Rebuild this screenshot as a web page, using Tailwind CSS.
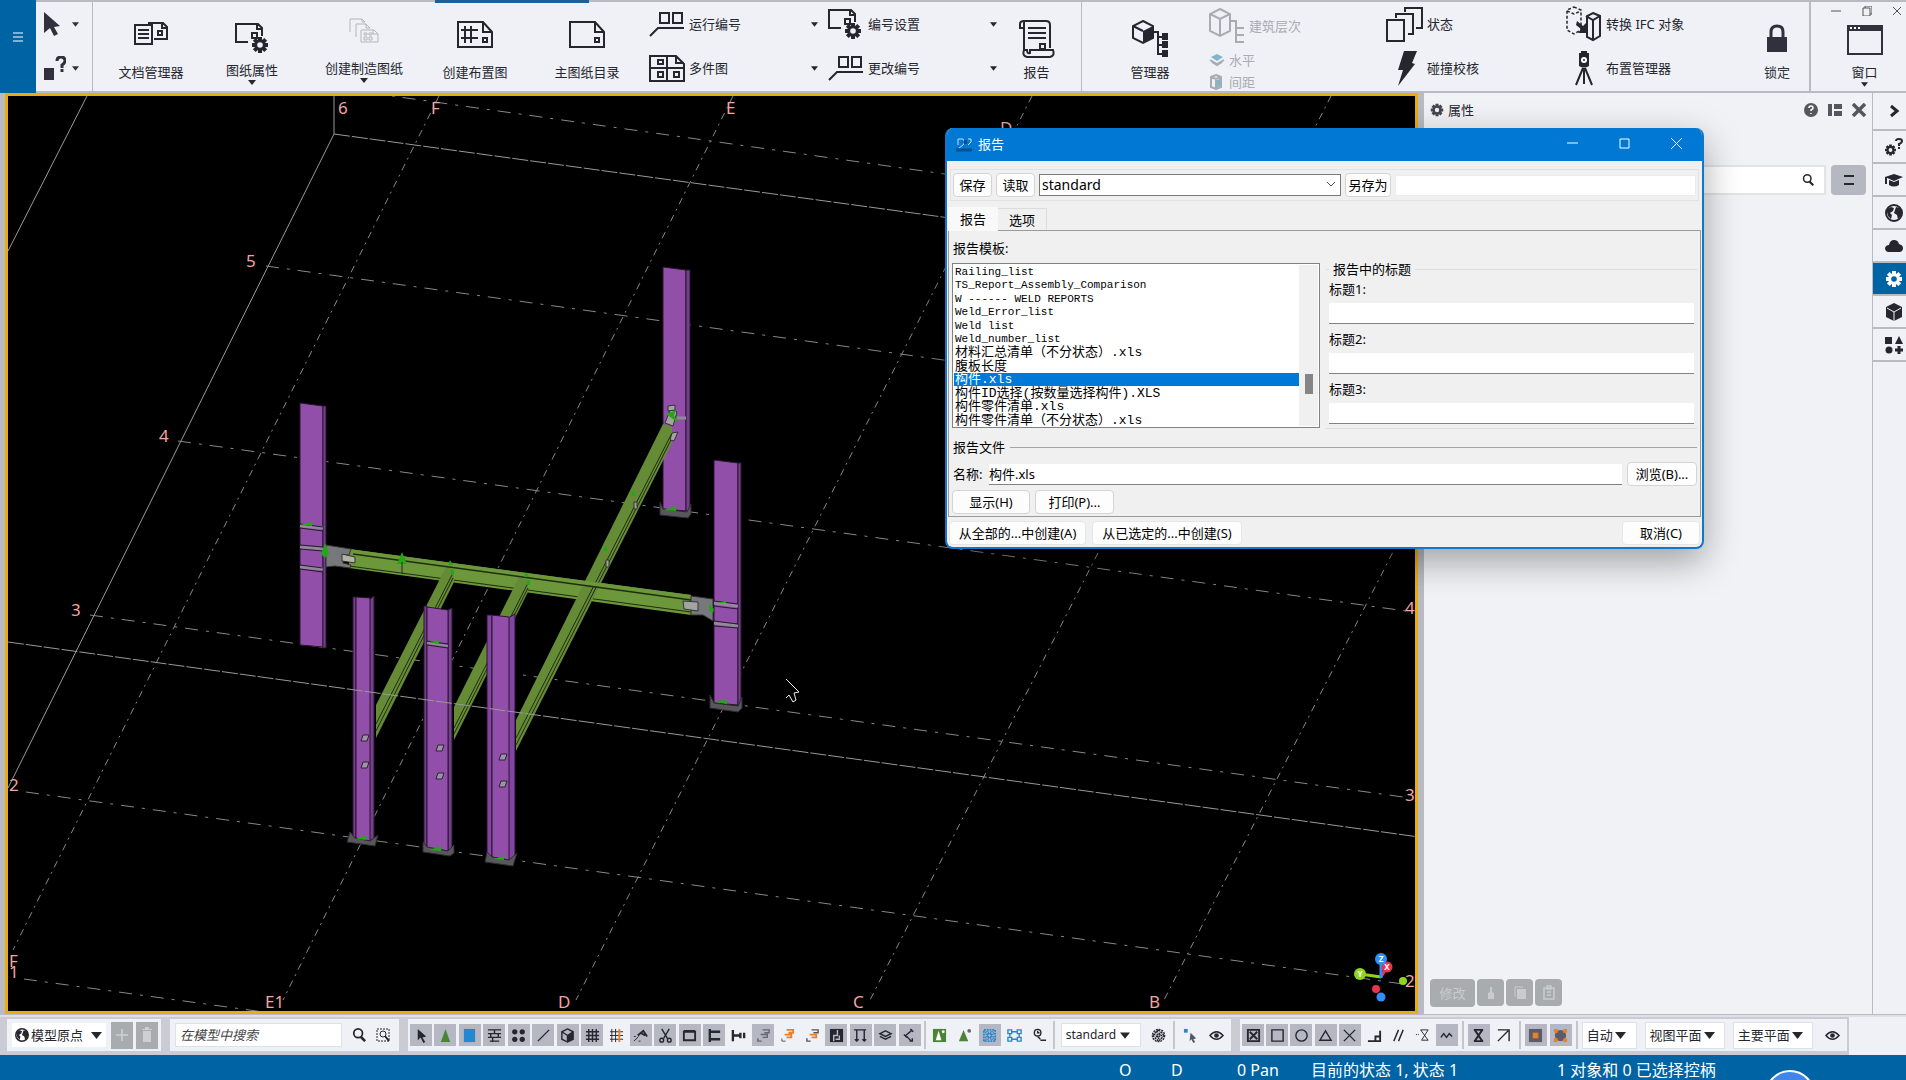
<!DOCTYPE html>
<html lang="zh-CN">
<head>
    <meta charset="UTF-8">
    <title>报告</title>
    <script src="https://cdn.jsdelivr.net/npm/@tailwindcss/browser@4"></script>
</head>
<body class="h-screen flex flex-col overflow-hidden bg-[#b9bac2] text-[#25262e] text-[13px] leading-4 font-['Noto_Sans','Noto_Sans_CJK_SC',sans-serif]">

    <!-- icon sprite -->
    <svg class="hidden">
        <defs>
            <g id="gear"><path d="M0-8V8M-8 0H8M-5.7-5.7 5.7 5.7M-5.7 5.7 5.7-5.7" stroke="currentColor" stroke-width="4"/><circle r="5.8" fill="currentColor"/><circle r="2.8" fill="var(--hole,#eff1f6)"/></g>
            <symbol id="i-docs" viewBox="0 0 34 24"><g fill="none" stroke="currentColor" stroke-width="2"><path d="M1 4h17v19H1zM4 9h11M4 13h11M4 17h11M14 2h15l4 4v12H20M28 1v6h5"/><path d="M24 10h4v4h-4z"/></g></symbol>
            <symbol id="i-props" viewBox="0 0 34 31"><path d="M13 19H1V1h22l4 4v8M22 1v5h5M17 10h5v5h-5z" fill="none" stroke="currentColor" stroke-width="2"/><use href="#gear" x="25" y="22"/></symbol>
            <symbol id="i-multi" viewBox="0 0 30 25"><g fill="none" stroke="currentColor"><path d="M1 14V1h12l3 3M13 1v3h3M7 19V6h10l4 4M17 6v4h4"/><path d="M12 24V12h13l4 4v8zM24 12v4h5M15 15h3v2h-3zM20 15h3v2h-3zM15 19h3v3h-3zM20 19h3v3h-3z"/></g></symbol>
            <symbol id="i-layout" viewBox="0 0 36 27"><g fill="none" stroke="currentColor" stroke-width="2"><path d="M1 1h25l9 10v15H1zM26 1v10h9M26 17h4v4h-4z"/><path d="M8 5v17M14 5v17M4 9h17M4 17h17"/></g></symbol>
            <symbol id="i-sheet" viewBox="0 0 36 27"><path d="M1 1h25l9 10v15H1zM26 1v10h9M26 17h4v4h-4z" fill="none" stroke="currentColor" stroke-width="2"/></symbol>
            <symbol id="i-number" viewBox="0 0 36 26"><path d="M11 2h9v10h-9zM24 2h9v10h-9zM35 17H9l-8 8" fill="none" stroke="currentColor" stroke-width="2"/></symbol>
            <symbol id="i-grid4" viewBox="0 0 36 27"><path d="M1 1h26l8 8v17H1zM18 1v25M1 13h34M27 1v7h8M9 5h5v4H9zM9 17h5v5H9zM25 17h5v5h-5z" fill="none" stroke="currentColor" stroke-width="2"/></symbol>
            <symbol id="i-report" viewBox="0 0 36 38"><g fill="none" stroke="currentColor" stroke-width="2"><path d="M5 8H1V4q0-3 4-3h22q4 0 4 4v23M5 2v28M9 8h18M9 13h18M9 18h18M21 24h5v5h-5z"/><path d="M11 30h23q2 6-3 7H8q-5-1-3-7h3q0 4 3 3z"/></g></symbol>
            <symbol id="i-manager" viewBox="0 0 37 38"><path d="M11 1 21 6v12L11 23 1 18V6z" fill="none" stroke="currentColor" stroke-width="2"/><path d="M11 11l10-5v12l-10 5z" fill="currentColor"/><path d="M1 6l10 5M22 12h4v22h6M26 17h6M26 25h6" fill="none" stroke="currentColor" stroke-width="2"/><path d="M30 13h6v7h-6zM30 21h6v7h-6zM30 30h6v7h-6z" fill="currentColor"/></symbol>
            <symbol id="i-storey" viewBox="0 0 36 36"><path d="M11 1 21 6v17l-10 5L1 23V6zM1 6l10 5 10-5M11 11v17M22 13h5v21h8M27 20h8M27 27h8" fill="none" stroke="currentColor" stroke-width="2"/></symbol>
            <symbol id="i-level" viewBox="0 0 16 14"><path d="M8 1l6 3-6 4-6-4z" fill="#7fb6cc"/><path d="M1 7l7 4 7-4M3 9l5 3 5-3" fill="none" stroke="currentColor" stroke-width="2"/></symbol>
            <symbol id="i-space" viewBox="0 0 14 16"><path d="M7 1l5 2v10l-5 2-5-2V3zM2 3l5 2 5-2M7 5v10" fill="none" stroke="currentColor" stroke-width="2"/><path d="M8 6l3-1v7l-3 2z" fill="#7fb6cc"/></symbol>
            <symbol id="i-states" viewBox="0 0 37 37"><path d="M1 14h17v21H1zM10 12V8h17v20h-5M19 6V2h17v20h-6" fill="none" stroke="currentColor" stroke-width="2"/></symbol>
            <symbol id="i-clash" viewBox="0 0 20 35"><path d="M7 0h13l-5 12 3 1L1 35l5-16H1z" fill="currentColor"/></symbol>
            <symbol id="i-ifc" viewBox="0 0 36 36"><path d="M8 1l7 3v20l-7 4-7-4V4zM1 5l7 3 7-3" fill="none" stroke="currentColor" stroke-width="1.500" stroke-dasharray="3 2"/><path d="M27 7l7 3v20l-7 4-6-3V10zM20 10l7 4 7-4M27 14v20" fill="none" stroke="currentColor" stroke-width="2"/><path d="M11 15l6 5 4-4v11h-9l3-4-5-4z" fill="currentColor"/></symbol>
            <symbol id="i-station" viewBox="0 0 20 35"><path d="M5 2h2V0h6v2h2v13q-5 3-10 0z" fill="currentColor"/><circle cx="10" cy="9" r="3" fill="#fff"/><circle cx="10" cy="9" r="1" fill="currentColor"/><path d="M9 17L2 34M11 17l7 17M10 17v16" stroke="currentColor" stroke-width="2"/></symbol>
            <symbol id="i-lock" viewBox="0 0 20 28"><path d="M4 14V8q0-6 6-6t6 6v6" fill="none" stroke="currentColor" stroke-width="3"/><path d="M0 13h20v15H0z" fill="currentColor"/></symbol>
            <symbol id="i-window" viewBox="0 0 36 30"><path d="M1 1h34v28H1z" fill="none" stroke="currentColor" stroke-width="2"/><path d="M0 0h36v6H0z" fill="currentColor"/><path d="M3 3h2M7 3h2M11 3h2" stroke="#fff" stroke-width="2"/></symbol>
            <symbol id="i-cursor" viewBox="0 0 16 24"><path d="M0 0l16 14-6 1 4 7-4 2-4-8-6 5z" fill="currentColor"/></symbol>
            <symbol id="i-help" viewBox="0 0 22 24"><path d="M0 12h10v12H0z" fill="currentColor"/><path d="M13 5q0-4 4-4t4 4q0 2-3 4v3M18 13v3" fill="none" stroke="currentColor" stroke-width="3"/></symbol>
            <symbol id="i-down" viewBox="0 0 8 5"><path d="M0 0h8L4 5z" fill="currentColor"/></symbol>
            <symbol id="i-search" viewBox="0 0 16 16"><circle cx="7" cy="6" r="5" fill="none" stroke="currentColor" stroke-width="2"/><path d="M10 10l5 5" stroke="currentColor" stroke-width="3"/></symbol>
            <symbol id="i-gear" viewBox="-9 -9 18 18"><use href="#gear"/></symbol>

            <!-- side bar -->
            <symbol id="s-arrow" viewBox="0 0 18 18"><path d="M6 4l6 5-6 5" fill="none" stroke="currentColor" stroke-width="3"/></symbol>
            <symbol id="s-gearq" viewBox="0 0 18 18"><g transform="translate(5.500 12) scale(.68)"><use href="#gear"/></g><path d="M11 3q0-2 3-2t3 2q0 2-3 3v2M14 9v2" fill="none" stroke="currentColor" stroke-width="2"/></symbol>
            <symbol id="s-learn" viewBox="0 0 18 18"><path d="M9 3l9 3-9 4-9-4zM4 9l5 2 5-2v5q-5 3-10 0z" fill="currentColor"/><path d="M1 6v7" stroke="currentColor" stroke-width="2"/></symbol>
            <symbol id="s-globe" viewBox="0 0 18 18"><circle cx="9" cy="9" r="8" fill="none" stroke="currentColor" stroke-width="2"/><path d="M2 5l4-2 3 1-1 3-3 2 2 2-1 4-3-3-1-4zM11 3l4 1 2 4-1 4-3 3-1-4-3-2 1-3z" fill="currentColor"/></symbol>
            <symbol id="s-cloud" viewBox="0 0 18 18"><path d="M3 15q-3-1-3-4 1-3 4-3 1-5 5-5 4 0 5 4 4 1 4 4 0 3-3 4z" fill="currentColor"/></symbol>
            <symbol id="s-cube" viewBox="0 0 18 18"><path d="M9 0l8 4v10l-8 4-8-4V4z" fill="currentColor"/><path d="M2 5l7 4 7-4M9 9v9" fill="none" stroke="#eff1f6"/></symbol>
            <symbol id="s-shapes" viewBox="0 0 18 18"><path d="M0 1h7v7H0zM14 0l4 8h-8z" fill="currentColor"/><circle cx="4" cy="14" r="3.500" fill="currentColor"/><path d="M14 10v8M10 14h8" stroke="currentColor" stroke-width="3"/></symbol>

            <!-- selection and snapping switches -->
            <g id="t-cursor"><path d="M4 1l9 8-4 1 3 5-2 1-3-6-3 3z" fill="currentColor"/></g>
            <g id="t-cone"><path d="M8 1l5 14H3z" fill="#4a8537"/></g>
            <g id="t-part"><path d="M2 1h12v14H2z" fill="#2488d0"/></g>
            <g id="t-surf"><path d="M1 2h14M1 6h14M1 10h14M3 14h10M8 2v4M4 6v4M12 6v4M6 10v5" stroke="currentColor" fill="none" stroke-width="1.500"/></g>
            <g id="t-points"><circle cx="4" cy="4" r="2.800" fill="currentColor"/><circle cx="12" cy="4" r="2.800" fill="currentColor"/><circle cx="4" cy="12" r="2.800" fill="currentColor"/><circle cx="12" cy="12" r="2.800" fill="currentColor"/></g>
            <g id="t-line"><path d="M2 14L14 2" stroke="currentColor" stroke-width="1.500"/></g>
            <g id="t-cube"><path d="M8 1l6 3v8l-6 3-6-3V4zM8 8v7M2 4l6 4 6-4" fill="none" stroke="currentColor" stroke-width="1.500"/><path d="M8 8l6-4v8l-6 3z" fill="currentColor"/></g>
            <g id="t-grid"><path d="M4 1v14M8 1v14M12 1v14M1 4h14M1 8h14M1 12h14" stroke="currentColor" stroke-width="1.500"/></g>
            <g id="t-gridl"><path d="M3 1v14M7 1v14M1 4h14M1 8h14M1 12h14" stroke="currentColor"/><path d="M11 1v14" stroke="#e8812a" stroke-width="2"/></g>
            <g id="t-weld"><path d="M5 8l6-5 4 6M8 5l5 3" fill="none" stroke="currentColor" stroke-width="2"/><path d="M1 14l5-5M1 9h2M6 14h2" stroke="currentColor"/></g>
            <g id="t-cut"><path d="M4 1l6 10M12 1L6 11" stroke="currentColor" stroke-width="1.500"/><circle cx="4" cy="13" r="2" fill="none" stroke="currentColor" stroke-width="1.500"/><circle cx="12" cy="13" r="2" fill="none" stroke="currentColor" stroke-width="1.500"/></g>
            <g id="t-view"><path d="M2 4h12v9H2zM2 3h12" fill="none" stroke="currentColor" stroke-width="2"/></g>
            <g id="t-bolt"><path d="M3 1v14M3 4h11M3 12h11" stroke="currentColor" stroke-width="2.500" fill="none"/></g>
            <g id="t-bolt1"><path d="M2 2v12M2 8h8M10 5v6M14 5v6" stroke="currentColor" stroke-width="2.500" fill="none"/></g>
            <g id="t-rebar"><path d="M7 2h7v3H9M5 7h7v3H7M2 11v3h4" fill="none" stroke="#666772" stroke-width="1.500"/></g>
            <g id="t-rebaro"><path d="M7 2h7v3H9M5 7h7v3H7" fill="none" stroke="#e8812a" stroke-width="2"/><path d="M2 11v3h4" fill="none" stroke="#555"/></g>
            <g id="t-rebarm"><path d="M7 2h7v3H9M2 11v3h4" fill="none" stroke="#555" stroke-width="1.500"/><path d="M5 7h7v3H7" fill="none" stroke="#e8812a" stroke-width="2"/></g>
            <g id="t-pour"><path d="M1 1h14v14H1z" fill="currentColor"/><path d="M9 2v6H5v6M11 8v4H7" fill="none" stroke="#b5b7c2" stroke-width="1.500"/></g>
            <g id="t-load"><path d="M1 2h13M4 2v12M12 2v12M2 12l2 2 2-2M10 12l2 2 2-2" fill="none" stroke="currentColor" stroke-width="1.500"/></g>
            <g id="t-plane"><path d="M8 3l6 3-6 3-6-3zM2 9l6 3 6-3" fill="none" stroke="currentColor" stroke-width="1.500"/></g>
            <g id="t-dist"><path d="M4 8l7-6M4 8l6 6M2 7l3 3M9 1l3 3M8 14h3v-3" fill="none" stroke="currentColor" stroke-width="1.500"/></g>
            <g id="t-comp"><path d="M1 1h14v14H1z" fill="#4a8537"/><path d="M7 3l3 10H4z" fill="#fff"/><circle cx="12" cy="4" r="1.500" fill="#fff"/></g>
            <g id="t-comp2"><path d="M7 2l5 12H2z" fill="#4a8537"/><circle cx="13" cy="3" r="2" fill="#666"/></g>
            <g id="t-asm"><path d="M2 2h12v12H2z" fill="none" stroke="#2488d0" stroke-width="2" stroke-dasharray="2 1"/><path d="M4 4h3v3H4zM9 4h3v3H9zM4 9h3v3H4zM9 9h3v3H9zM6 6h4v4H6z" fill="none" stroke="#2488d0"/></g>
            <g id="t-asm2"><path d="M1 2h4v4H1zM11 2h4v4h-4zM1 10h4v4H1zM11 10h4v4h-4zM5 4h6M5 12h6M3 6v4M13 6v4" fill="none" stroke="#2488d0" stroke-width="1.500"/></g>
            <g id="t-task"><circle cx="6" cy="5" r="3.500" fill="none" stroke="currentColor" stroke-width="1.500"/><path d="M6 3v2h2M6 9l3 3M9 13h6" fill="none" stroke="currentColor" stroke-width="1.500"/></g>
            <g id="t-hatch"><circle cx="8" cy="8" r="6.500" fill="none" stroke="currentColor" stroke-width="1.500" stroke-dasharray="2 1"/><path d="M4 4l8 8M8 2l6 6M2 8l6 6M12 4l-8 8M8 2L2 8M14 8l-6 6M6 3l7 7M3 6l7 7" stroke="currentColor" stroke-dasharray="2 1" stroke-width="1.500"/></g>
            <g id="t-pick"><path d="M1 1h4v4H1z" fill="#2488d0"/><path d="M8 5l6 6-3 1 2 3-2 1-2-4-2 2z" fill="#555662"/></g>
            <g id="t-eye"><path d="M1 8q7-8 14 0-7 8-14 0z" fill="none" stroke="currentColor" stroke-width="1.500"/><circle cx="8" cy="8" r="2.500" fill="currentColor"/></g>
            <g id="t-boxx"><path d="M2 2h12v12H2zM4 4l8 8M12 4l-8 8" fill="none" stroke="currentColor" stroke-width="2"/></g>
            <g id="t-box"><path d="M2 2h12v12H2z" fill="none" stroke="currentColor" stroke-width="1.500"/></g>
            <g id="t-circle"><circle cx="8" cy="8" r="6" fill="none" stroke="currentColor" stroke-width="1.500"/></g>
            <g id="t-tri"><path d="M8 3l6 10H2z" fill="none" stroke="currentColor" stroke-width="1.500"/></g>
            <g id="t-x"><path d="M2 2l12 12M14 2L2 14" stroke="currentColor" stroke-width="1.500"/></g>
            <g id="t-perp"><path d="M1 14h13V3M9 14V9h5" fill="none" stroke="currentColor" stroke-width="2"/></g>
            <g id="t-par"><path d="M3 14L8 2M8 14l5-12" stroke="currentColor" stroke-width="1.500"/></g>
            <g id="t-ext"><path d="M1 7h4" stroke="currentColor" stroke-dasharray="1 1"/><path d="M6 2h8L7 13h7L6 2" fill="none" stroke="currentColor"/></g>
            <g id="t-wave"><path d="M2 10l3-4 3 4 3-4 3 3" fill="none" stroke="currentColor" stroke-width="1.500"/></g>
            <g id="t-hour"><path d="M3 2h10M3 14h10M4 2l8 12M12 2L4 14" stroke="currentColor" stroke-width="2"/></g>
            <g id="t-ne"><path d="M2 14L13 3M2 2h12v12" fill="none" stroke="currentColor" stroke-width="1.500"/></g>
            <g id="t-snap"><path d="M1 1h14v14H1z" fill="#5d5b6b"/><path d="M5 5h6v6H5z" fill="#e8812a"/></g>
            <g id="t-snap2"><circle cx="8" cy="8" r="6" fill="#5d5b6b"/><path d="M1 1h4v4H1zM11 1h4v4h-4zM1 11h4v4H1zM11 11h4v4h-4z" fill="#e8812a"/></g>
        </defs>
    </svg>

    <!-- ribbon -->
    <header class="h-[93px] shrink-0 flex bg-[#eff1f6] border-t-2 border-b-2 border-[#b9bac2] relative">
        <div class="absolute -top-[2px] left-[435px] w-[154px] h-[3px] bg-[#1f5f96]"></div>
        <button class="w-9 -my-[2px] bg-[#0063a3] text-white flex items-center justify-center" aria-label="菜单">
            <svg class="w-[10px] h-[10px] mb-5" viewBox="0 0 10 10"><path d="M0 1h10M0 5h10M0 9h10" stroke="currentColor"/></svg>
        </button>
        <div class="w-[57px] border-r border-[#b9bac2] flex flex-col gap-5 pt-[10px] pl-2 text-[#30313d]">
            <button class="flex items-center gap-3" aria-label="选择"><svg class="w-4 h-6"><use href="#i-cursor"/></svg><svg class="w-[7px] h-[5px]"><use href="#i-down"/></svg></button>
            <button class="flex items-center gap-[6px]" aria-label="帮助"><svg class="w-[22px] h-6"><use href="#i-help"/></svg><svg class="w-[7px] h-[5px]"><use href="#i-down"/></svg></button>
        </div>
        <button class="w-[116px] flex flex-col items-center pt-[19px]"><svg class="w-[34px] h-6 mb-[19px]"><use href="#i-docs"/></svg>文档管理器</button>
        <button class="w-[86px] flex flex-col items-center pt-[21px]"><svg class="w-[34px] h-[31px] mb-2"><use href="#i-props"/></svg>图纸属性<svg class="w-2 h-[5px] mt-[2px]"><use href="#i-down"/></svg></button>
        <button class="w-[138px] flex flex-col items-center pt-4"><svg class="w-[30px] h-[25px] mb-[17px] text-[#b4b5bb]"><use href="#i-multi"/></svg>创建制造图纸<svg class="w-2 h-[5px] mt-[2px]"><use href="#i-down"/></svg></button>
        <button class="w-[84px] flex flex-col items-center pt-[19px]"><svg class="w-9 h-[27px] mb-4"><use href="#i-layout"/></svg>创建布置图</button>
        <button class="w-[128px] pl-3 flex flex-col items-center pt-[19px]"><svg class="w-9 h-[27px] mb-4"><use href="#i-sheet"/></svg>主图纸目录</button>
        <div class="w-[179px] flex flex-col gap-1 pt-[2px] pl-1 pr-[6px]">
            <button class="h-10 flex items-center gap-1"><svg class="w-9 h-[26px]"><use href="#i-number"/></svg>运行编号<svg class="w-[7px] h-[5px] ml-auto"><use href="#i-down"/></svg></button>
            <button class="h-10 flex items-center gap-1"><svg class="w-9 h-[27px]"><use href="#i-grid4"/></svg>多件图<svg class="w-[7px] h-[5px] ml-auto"><use href="#i-down"/></svg></button>
        </div>
        <div class="w-[179px] flex flex-col gap-1 pt-[2px] pl-1 pr-[6px]">
            <button class="h-10 flex items-center gap-[6px]"><svg class="w-[34px] h-[31px]"><use href="#i-props"/></svg>编号设置<svg class="w-[7px] h-[5px] ml-auto"><use href="#i-down"/></svg></button>
            <button class="h-10 flex items-center gap-1"><svg class="w-9 h-[26px]"><use href="#i-number"/></svg>更改编号<svg class="w-[7px] h-[5px] ml-auto"><use href="#i-down"/></svg></button>
        </div>
        <button class="w-[67px] flex flex-col items-center pt-[18px]"><svg class="w-9 h-[38px] mb-[6px]"><use href="#i-report"/></svg>报告</button>
        <div class="w-3 border-r border-[#b9bac2]"></div>
        <button class="w-[124px] pl-3 flex flex-col items-center pt-[18px]"><svg class="w-[37px] h-[38px] mb-[6px]"><use href="#i-manager"/></svg>管理器</button>
        <div class="w-[180px] flex flex-col items-start pt-1 pl-[3px] text-[#a9abb2]">
            <button class="h-10 flex items-center gap-1"><svg class="w-9 h-9"><use href="#i-storey"/></svg>建筑层次</button>
            <button class="h-7 flex items-center gap-1"><svg class="w-4 h-[14px]"><use href="#i-level"/></svg>水平</button>
            <button class="h-4 flex items-center gap-[6px]"><svg class="w-[14px] h-4"><use href="#i-space"/></svg>间距</button>
        </div>
        <div class="w-[180px] flex flex-col items-start gap-1 pt-[2px]">
            <button class="h-10 flex items-center gap-1"><svg class="w-[37px] h-[37px]"><use href="#i-states"/></svg>状态</button>
            <button class="h-10 flex items-center gap-[10px] pl-[11px]"><svg class="w-5 h-[35px]"><use href="#i-clash"/></svg>碰撞校核</button>
        </div>
        <div class="flex-1 flex flex-col items-start gap-1 pt-[2px]">
            <button class="h-10 flex items-center gap-1"><svg class="w-9 h-9"><use href="#i-ifc"/></svg>转换 IFC 对象</button>
            <button class="h-10 flex items-center gap-[12px] pl-2"><svg class="w-5 h-[35px]"><use href="#i-station"/></svg>布置管理器</button>
        </div>
        <button class="w-[64px] flex flex-col items-center pt-[22px] text-[#30313d]"><svg class="w-5 h-7 mb-3"><use href="#i-lock"/></svg>锁定</button>
        <div class="w-[97px] border-l-2 border-[#b9bac2] flex flex-col items-center">
            <div class="self-stretch flex justify-between items-start pl-5 pr-1 pt-1 h-[23px] text-[#555]">
                <button aria-label="最小化"><svg class="w-[10px] h-[10px]" viewBox="0 0 10 10"><path d="M0 5h10" stroke="currentColor"/></svg></button>
                <button aria-label="还原"><svg class="w-[10px] h-[10px]" viewBox="0 0 10 10"><path d="M1 2h7v8H1zM3 2V0h7v8H8" fill="none" stroke="currentColor"/></svg></button>
                <button aria-label="关闭"><svg class="w-[10px] h-[10px]" viewBox="0 0 10 10"><path d="M1 1l8 8M9 1L1 9" stroke="currentColor"/></svg></button>
            </div>
            <button class="flex flex-col items-center pl-3"><svg class="w-9 h-[30px] mb-[9px] text-[#30313d]"><use href="#i-window"/></svg>窗口<svg class="w-[7px] h-[5px] mt-[2px]"><use href="#i-down"/></svg></button>
        </div>
    </header>

    <main class="flex-1 min-h-0 flex">
        <!-- model view -->
        <section class="flex-1 min-w-0 ml-[5px] mr-[6px] mb-[1px] border-[3px] border-[#e6ae0e] bg-black overflow-hidden">
            <svg class="w-full h-full" viewBox="7 96 1407 916" preserveAspectRatio="xMinYMin slice">
                <g stroke="#999" fill="none">
                    <path d="M86 96L7 251M333 96v38L7 788"/>
                    <path d="M333 134L1418 282" stroke-dasharray="16 2"/>
                    <path d="M370 93L1418 241M265 266L1418 426M177 441L1405 611M89 615L1402 797M25 792L1402 984M23 979L270 1013" stroke="#888" stroke-dasharray="13 8 3 8"/>
                    <path d="M438 96L12 950M732 96L282 1000M1031 96L575 1000M1330 96L869 1000M1625 96L1163 1000" stroke="#888" stroke-dasharray="7 5 2 5"/>
                </g>

                <!-- rear columns -->
                <g fill="#924fa9" stroke="#2a1433">
                    <path d="M299 403l23 3v241l-23-2z"/><path d="M322 406h3v242h-3z" fill="#74408a"/>
                    <path d="M662 267l23 3v241l-23-2z"/><path d="M685 270h4v241h-4z" fill="#74408a"/>
                    <path d="M713 460l24 3v242l-24-2z"/><path d="M737 463h3v242h-3z" fill="#74408a"/>
                </g>
                <g fill="#58585c" stroke="#2c2c30">
                    <path d="M659 502l3 7 24 3 4-8v10l-3 4-28-3z"/>
                    <path d="M709 695l4 8 24 3 4-9v11l-4 4-28-4z"/>
                </g>
                <g stroke="#8f8a96" stroke-width="3">
                    <path d="M299 526l23 2M299 547l23 2M299 567l23 2M713 603l24 3M713 623l24 3M676 418h9"/>
                </g>
                <g stroke="#241a2b">
                    <path d="M299 524l23 3M299 528l23 3M299 545l23 2M299 549l23 2M299 565l23 3M299 569l23 3M713 601l24 3M713 606l24 3M713 621l24 3M713 626l24 2"/>
                </g>

                <!-- main beam -->
                <path d="M348 549L690 595V615L348 568z" fill="#6d973b"/>
                <path d="M348 566L690 612" stroke="#1f2d10" fill="none"/>

                <!-- cross beams -->
                <g fill="#668b36">
                    <path d="M662 424L671 427V443L515 751V720z"/>
                    <path d="M518 577l9 3v12L453 740V707z"/>
                    <path d="M445 567l8 3v12L375 738V705z"/>
                </g>
                <g stroke="#1f2d10" fill="none">
                    <path d="M671 433L515 738M671 438L515 745"/>
                    <path d="M527 583L453 728M527 588L453 734"/>
                    <path d="M452 573L375 724M452 578L375 731"/>
                </g>
                <path d="M348 549L690 595V599L348 553z" fill="#6d973b"/>
                <path d="M352 554L690 600" stroke="#1f2d10" stroke-width="1.500"/>

                <!-- connections -->
                <g stroke="#333" fill="#77787c">
                    <path d="M325 545l25 4-2 6-6 0v8l8 2-1 3-15-2-9 1z"/>
                    <path d="M341 554l13 3v6l-13-2z" fill="#b5b2a8"/>
                    <path d="M690 596l22 3v22l-10-6-12 0z"/>
                    <path d="M682 601l15 1v9l-14-2z" fill="#a3a3a1"/>
                    <path d="M664 423l6-15 6 4-4 14z" fill="#a3a3a1"/>
                    <path d="M667 406l7-1v5l-7 1zM671 433l6-1-4 9-4-1z" fill="#a3a3a1"/>
                    <path d="M633 502h3v7h-3zM605 560h3v7h-3z" fill="#a3a3a1"/>
                </g>

                <!-- front columns -->
                <g fill="#924fa9" stroke="#2a1433">
                    <path d="M352 597h3v241h-3zM368 600l5-4v243l-5 2z" fill="#74408a"/><path d="M355 597l14 1v243l-14-3z"/>
                    <path d="M423 606h3v241h-3zM447 610l4-2v242l-4 2z" fill="#74408a"/><path d="M426 607l21 3v241l-21-3z"/>
                    <path d="M486 615h5v242h-5zM507 618l7-4v244l-7 2z" fill="#8045a0"/><path d="M491 615l17 2v243l-17-3z"/>
                </g>
                <g fill="#58585c" stroke="#2c2c30">
                    <path d="M349 832l5 6 15 3 8-6-3 11-28-4z"/>
                    <path d="M422 842l4 5 21 4 6-6v8l-4 3-27-4z"/>
                    <path d="M486 852l5 5 17 3 8-7-4 13-28-4z"/>
                </g>
                <path d="M426 643l21 3" stroke="#8f8a96" stroke-width="2"/>
                <path d="M426 641l21 3M426 645l21 3" stroke="#241a2b"/>
                <g fill="#9c93a5" stroke="#2c2233">
                    <path d="M362 735h6l-2 6h-6zM362 762h6l-2 6h-6zM437 745h6l-2 6h-6zM437 773h6l-2 6h-6zM500 754h6l-2 6h-6zM500 781h6l-2 6h-6z"/>
                </g>
                <g fill="#27a51a">
                    <path d="M299 525l12-3v4zM324 543l4 10-4 5-4-4zM401 552l5 12h-10zM449 560l3 5h-5zM525 572l3 5h-5zM450 570h3v5h-3zM526 580h3v5h-3zM632 490l3 6h-5zM604 545l3 6h-5zM663 510l12-4v5zM714 702l12-3v5zM715 603h10v-2zM708 604l5 5-1 4-4-3zM665 414l10-4-2 6 5 5-2 1zM355 839l10-4v5zM428 642l10-2v4zM428 850l12-4v5zM492 859l11-3v4z"/>
                </g>
                <path d="M401 562v12" stroke="#1f2d10"/>
                <path d="M7 642L1418 837" stroke="#999" stroke-dasharray="16 2"/>

                <g fill="#f2a3a3" class="text-[17px] font-['Noto_Sans',sans-serif]">
                    <text x="337" y="114">6</text><text x="430" y="114">F</text><text x="725" y="114">E</text><text x="999" y="134">D</text>
                    <text x="245" y="267">5</text><text x="158" y="442">4</text><text x="70" y="616">3</text><text x="8" y="791">2</text>
                    <text x="8" y="967">F</text><text x="8" y="978">1</text>
                    <text x="264" y="1008">E1</text><text x="557" y="1008">D</text><text x="852" y="1008">C</text><text x="1148" y="1008">B</text>
                    <text x="1404" y="614">4</text><text x="1404" y="801">3</text><text x="1404" y="987">2</text>
                </g>

                <!-- axis gizmo -->
                <g stroke-width="3">
                    <path d="M1380 977L1359 974" stroke="#8fd61a"/><path d="M1380 977l6-10" stroke="#e8344e"/><path d="M1380 978v-20" stroke="#2f8ffb"/>
                </g>
                <circle cx="1359" cy="974" r="6" fill="#8fd61a"/><circle cx="1386" cy="967" r="5.500" fill="#e8344e"/><circle cx="1380" cy="959" r="6" fill="#2f8ffb"/>
                <circle cx="1402" cy="981" r="4" fill="#8fd61a"/><circle cx="1375" cy="989" r="4" fill="#e8344e"/><circle cx="1380" cy="997" r="4.500" fill="#2f8ffb"/>
                <g fill="#fff" text-anchor="middle" class="text-[8px] font-bold"><text x="1359" y="977">Y</text><text x="1386" y="970">X</text><text x="1380" y="962">Z</text></g>
                <path d="M785 679l13 13-5 1 2 7-3 2-4-7-3 3" fill="none" stroke="#eee"/>
            </svg>
        </section>

        <!-- property pane -->
        <aside class="w-[449px] bg-[#f1f2f5] border-r border-[#b9bac2] flex flex-col mb-[1px]">
            <div class="h-[34px] flex items-center gap-1 pl-[6px] pr-[6px]">
                <svg class="w-[14px] h-[14px] text-[#44454d]"><use href="#i-gear"/></svg>
                <h2>属性</h2>
                <button class="ml-auto" aria-label="帮助"><svg class="w-[14px] h-[14px]" viewBox="0 0 14 14"><circle cx="7" cy="7" r="7" fill="#55575f"/><path d="M5 5q0-2 2-2t2 2q0 1-2 2v1M7 10v1" fill="none" stroke="#fff" stroke-width="1.500"/></svg></button>
                <button class="ml-[6px]" aria-label="面板"><svg class="w-[14px] h-[12px]" viewBox="0 0 14 12"><path d="M0 0h4v12H0zM6 0h8v5H6zM6 7h8v5H6z" fill="#55575f"/></svg></button>
                <button class="ml-[6px]" aria-label="关闭"><svg class="w-[14px] h-[14px]" viewBox="0 0 14 14"><path d="M1 1l12 12M13 1L1 13" stroke="#55575f" stroke-width="3.500"/></svg></button>
            </div>
            <div class="flex items-center gap-[5px] mt-[38px] pl-[6px] pr-[6px]">
                <div class="flex-1 h-[30px] flex items-center bg-white border-2 border-[#e3e3e5] pr-[10px]">
                    <input class="flex-1 outline-none" type="text" aria-label="搜索属性">
                    <svg class="w-3 h-3"><use href="#i-search"/></svg>
                </div>
                <button class="w-[35px] h-[30px] rounded bg-[#b5b7c1] flex items-center justify-center" aria-label="列表"><svg class="w-[10px] h-[10px]" viewBox="0 0 10 10"><path d="M0 1h10M0 9h10" stroke="currentColor" stroke-width="2"/></svg></button>
            </div>
            <div class="mt-auto mb-[7px] pl-[6px] flex items-start gap-[2px] text-[#c9cbce]">
                <button class="w-[45px] h-[28px] rounded bg-[#a9acaf]">修改</button>
                <button class="w-[27px] h-[27px] rounded bg-[#a9acaf] flex items-center justify-center" aria-label="格式刷"><svg class="w-3 h-4" viewBox="0 0 12 16"><path d="M5 2h2v5l2 1v6H3V8l2-1z" fill="currentColor"/></svg></button>
                <button class="w-[27px] h-[27px] rounded bg-[#a9acaf] flex items-center justify-center" aria-label="复制"><svg class="w-3 h-4" viewBox="0 0 12 16"><path d="M1 12V2h8" fill="none" stroke="currentColor"/><path d="M3 4h9v10H3z" fill="currentColor"/></svg></button>
                <button class="w-[27px] h-[27px] rounded bg-[#a9acaf] flex items-center justify-center" aria-label="粘贴"><svg class="w-3 h-4" viewBox="0 0 12 16"><path d="M1 3h10v11H1zM4 1h4v3H4zM4 7h4M4 10h4" fill="none" stroke="currentColor" stroke-width="1.500"/></svg></button>
            </div>
        </aside>

        <nav id="sideBar" class="w-[33px] flex flex-col bg-[#eff1f6] mb-[1px]"></nav>
    </main>

    <!-- bottom toolbars -->
    <div class="h-10 shrink-0 flex bg-[#eff1f6] border-t-2 border-[#dfe0e6]">
        <div class="w-[163px] border-t-2 border-b-4 border-l-[7px] border-r-2 border-[#cbccd3] flex items-center gap-[3px] pl-[5px]">
            <label class="w-[94px] h-[24px] flex items-center gap-[2px] bg-white pl-[3px] mr-[2px]">
                <svg class="w-[14px] h-[14px]"><use href="#s-globe"/></svg>
                <select class="appearance-none outline-none w-[54px]" aria-label="原点"><option>模型原点</option></select>
                <svg class="w-[11px] h-[7px] ml-1"><use href="#i-down"/></svg>
            </label>
            <button class="w-[22px] h-[27px] bg-[#a9acaf] text-[#cdcfd3] flex items-center justify-center" aria-label="添加"><svg class="w-3 h-3" viewBox="0 0 12 12"><path d="M6 0v12M0 6h12" stroke="currentColor" stroke-width="1.500"/></svg></button>
            <button class="w-[22px] h-[27px] bg-[#a9acaf] text-[#cdcfd3] flex items-center justify-center" aria-label="删除"><svg class="w-3 h-4" viewBox="0 0 12 16"><path d="M2 4h8v11H2zM1 2h10v1H1zM4 0h4v2H4z" fill="currentColor"/></svg></button>
        </div>
        <div class="w-[238px] border-t-2 border-b-4 border-l-[7px] border-r-2 border-[#cbccd3] flex items-center pl-[5px] pr-[9px]">
            <input class="w-[167px] h-6 px-1 bg-white border border-[#e0e1e5] outline-none placeholder:italic placeholder:text-[#444]" type="text" placeholder="在模型中搜索" aria-label="在模型中搜索">
            <button class="ml-auto" aria-label="搜索"><svg class="w-[14px] h-[14px]"><use href="#i-search"/></svg></button>
            <button class="ml-auto" aria-label="在选择中搜索"><svg class="w-[14px] h-[14px]" viewBox="0 0 14 14"><path d="M1 1h12v12H1z" fill="none" stroke="currentColor" stroke-dasharray="2 1"/><circle cx="7" cy="6" r="3" fill="none" stroke="currentColor"/><path d="M9 8l4 5" stroke="currentColor" stroke-width="2"/></svg></button>
        </div>
        <div class="w-[832px] border-t-2 border-b-4 border-l-[7px] border-r-2 border-[#cbccd3] flex items-center pl-[2px] pr-1">
            <div id="selectTools" class="w-[516px] flex justify-between"></div>
            <div class="w-[2px] h-7 mx-[3px] bg-[#c4c5cd]"></div>
            <div id="modeTools" class="w-[123px] flex justify-between"></div>
            <div class="w-[2px] h-7 mx-[2px] bg-[#c4c5cd]"></div>
            <label class="ml-1 h-6 w-[81px] flex items-center bg-white border border-[#e0e1e5] pl-1">
                <select class="appearance-none outline-none text-[12px] w-[54px]" aria-label="过滤器"><option>standard</option></select>
                <svg class="w-[10px] h-[7px]"><use href="#i-down"/></svg>
            </label>
            <div id="filterTools" class="ml-[6px]"></div>
            <div class="w-[2px] h-7 mx-1 bg-[#c4c5cd]"></div>
            <div id="viewTools" class="flex gap-1"></div>
        </div>
        <div class="w-[616px] border-t-2 border-b-4 border-l-[7px] border-r-2 border-[#cbccd3] flex items-center pl-[2px] pr-1">
            <div id="snapTools" class="w-[221px] flex justify-between"></div>
            <div class="w-[2px] h-7 mx-1 bg-[#c4c5cd]"></div>
            <div id="dragTools" class="flex gap-[3px]"></div>
            <div class="w-[2px] h-7 mx-1 bg-[#c4c5cd]"></div>
            <div id="refTools" class="flex gap-[3px]"></div>
            <div class="w-[2px] h-7 mx-1 bg-[#c4c5cd]"></div>
            <label class="h-[27px] w-[56px] mr-2 flex items-center bg-white border border-[#e0e1e5] pl-1">
                <select class="appearance-none outline-none w-7" aria-label="深度"><option>自动</option></select>
                <svg class="w-[11px] h-[7px]"><use href="#i-down"/></svg>
            </label>
            <label class="h-[27px] w-[82px] mr-2 flex items-center bg-white border border-[#e0e1e5] pl-1">
                <select class="appearance-none outline-none w-[54px]" aria-label="平面"><option>视图平面</option></select>
                <svg class="w-[11px] h-[7px]"><use href="#i-down"/></svg>
            </label>
            <label class="h-[27px] w-[82px] mr-2 flex items-center bg-white border border-[#e0e1e5] pl-1">
                <select class="appearance-none outline-none w-[54px]" aria-label="主要平面"><option>主要平面</option></select>
                <svg class="w-[11px] h-[7px]"><use href="#i-down"/></svg>
            </label>
            <div id="eyeTools"></div>
        </div>
    </div>

    <!-- status bar -->
    <footer class="h-[25px] shrink-0 bg-[#0063a3] text-white text-[16px] leading-5 pt-[5px] pl-[1119px] flex relative overflow-hidden whitespace-nowrap">
        <span class="w-[52px]">O</span>
        <span class="w-[66px]">D</span>
        <span class="w-[74px]">0 Pan</span>
        <span class="w-[246px]">目前的状态 1, 状态 1</span>
        <span>1 对象和 0 已选择控柄</span>
        <div class="absolute left-[1765px] top-[15px] w-[50px] h-[50px] rounded-full border-2 border-white bg-[#3f86e8]"></div>
    </footer>

    <!-- report dialog -->
    <div role="dialog" aria-label="报告" class="absolute left-[945px] top-[128px] w-[759px] rounded-lg overflow-hidden border-2 border-t-0 border-[#0f78cb] bg-[#f0f0f0] text-black shadow-[0_12px_36px_rgba(0,0,0,0.35)]">
        <div class="h-[33px] bg-[#0078d4] text-white flex items-center pl-2 pb-[2px]">
            <svg class="w-[18px] h-[16px] mr-[5px]" viewBox="0 0 18 16"><path d="M1 14h16" stroke="#0a4f8f" stroke-width="3"/><path d="M3 9V3h5l2 3-2 3-4 3M13 3h3v3l-3 3" fill="none" stroke="#bfe0fa"/><path d="M9 4h3v4H9z" fill="#0a4f8f"/></svg>
            <span>报告</span>
            <button class="ml-auto w-[52px] flex justify-center" aria-label="最小化"><svg class="w-[11px] h-[11px]" viewBox="0 0 11 11"><path d="M0 5h11" stroke="currentColor"/></svg></button>
            <button class="w-[52px] flex justify-center" aria-label="最大化"><svg class="w-[11px] h-[11px]" viewBox="0 0 11 11"><path d="M1 1h9v9H1z" fill="none" stroke="currentColor"/></svg></button>
            <button class="w-[52px] flex justify-center" aria-label="关闭"><svg class="w-[11px] h-[11px]" viewBox="0 0 11 11"><path d="M0 0l11 11M11 0L0 11" stroke="currentColor"/></svg></button>
        </div>
        <div class="mt-2 mx-[3px] h-8 border border-[#e2e2e2] flex items-center gap-1 px-[2px]">
            <button class="w-[39px] h-6 rounded border border-[#d4d4d4] bg-[#fdfdfd]">保存</button>
            <button class="w-[39px] h-6 rounded border border-[#d4d4d4] bg-[#fdfdfd]">读取</button>
            <label class="w-[302px] h-[22px] flex items-center bg-white border border-[#7a7a7a] pl-[2px] pr-1">
                <select class="appearance-none outline-none flex-1 text-[14px]" aria-label="设置文件"><option>standard</option></select>
                <svg class="w-[9px] h-[6px]" viewBox="0 0 9 6"><path d="M0 0l4 4 4-4" fill="none" stroke="#555"/></svg>
            </label>
            <button class="w-[46px] h-6 rounded border border-[#d4d4d4] bg-[#fdfdfd]">另存为</button>
            <input class="flex-1 min-w-0 h-[21px] bg-white border border-[#ececec] outline-none" type="text" aria-label="另存为">
        </div>
        <div class="mt-[6px] ml-[1px] flex items-end">
            <button class="w-[50px] h-6 bg-[#f9f9f9] -mb-px relative">报告</button>
            <button class="w-[49px] h-[22px] border-t border-r border-[#dcdcdc]">选项</button>
        </div>
        <div class="mx-[1px] border border-[#9a9a9a] px-[3px] pb-[2px]">
            <label for="templates" class="block pt-[9px] pb-[7px] pl-[1px]">报告模板:</label>
            <div class="flex gap-[6px]">
                <div class="w-[368px] h-[165px] flex bg-white border border-[#828282] p-px">
                    <select id="templates" size="12" class="flex-1 min-w-0 h-full overflow-hidden outline-none border-0 p-0 text-[11px] font-['Liberation_Mono','Noto_Sans_CJK_SC',monospace]"></select>
                    <div class="w-[19px] bg-[#f0f0f0] pt-[109px] pl-[6px]"><div class="w-2 h-5 bg-[#858585]"></div></div>
                </div>
                <fieldset class="flex-1 h-[168px] -mt-[2px] border border-[#dcdcdc] border-x-0 px-[3px]">
                    <legend class="px-1">报告中的标题</legend>
                    <label class="block h-[50px] pt-1">标题1:<input class="block mt-[6px] w-full h-[21px] bg-white border-b border-[#828282] outline-none" type="text"></label>
                    <label class="block h-[50px] pt-1">标题2:<input class="block mt-[6px] w-full h-[21px] bg-white border-b border-[#828282] outline-none" type="text"></label>
                    <label class="block h-[50px] pt-1">标题3:<input class="block mt-[6px] w-full h-[21px] bg-white border-b border-[#828282] outline-none" type="text"></label>
                </fieldset>
            </div>
            <div class="mt-[10px] h-4 flex items-center gap-[5px] pl-[1px]">报告文件<span class="flex-1 h-px bg-[#a5a5a5]"></span></div>
            <div class="mt-[7px] h-6 flex items-center pl-[1px]">
                <label for="fileName" class="w-9">名称:</label>
                <input id="fileName" class="flex-1 h-[21px] bg-white border-b border-[#828282] outline-none" type="text" value="构件.xls">
                <button class="ml-[5px] w-[70px] h-6 rounded border border-[#d4d4d4] bg-[#fdfdfd]">浏览(B)...</button>
            </div>
            <div class="mt-1 flex gap-[5px]">
                <button class="w-[78px] h-6 rounded border border-[#d4d4d4] bg-[#fdfdfd]">显示(H)</button>
                <button class="w-[79px] h-6 rounded border border-[#d4d4d4] bg-[#fdfdfd]">打印(P)...</button>
            </div>
        </div>
        <div class="mt-1 mb-[2px] mx-[2px] flex gap-[6px]">
            <button class="w-[137px] h-6 rounded border border-[#e6e6e6] bg-[#fdfdfd]">从全部的...中创建(A)</button>
            <button class="w-[150px] h-6 rounded border border-[#e6e6e6] bg-[#fdfdfd]">从已选定的...中创建(S)</button>
            <button class="ml-auto w-[78px] h-6 rounded border border-[#e6e6e6] bg-[#fdfdfd]">取消(C)</button>
        </div>
    </div>

    <script>
        // name, pressed
        const toolbars = {
            selectTools: [['cursor', 1], ['cone', 1], ['part', 1], ['surf', 1], ['points', 1], ['line', 1], ['cube', 1], ['grid', 1], ['gridl', 0], ['weld', 1], ['cut', 1], ['view', 1], ['bolt', 1], ['bolt1', 0], ['rebar', 1], ['rebaro', 0], ['rebarm', 0], ['pour', 1], ['load', 1], ['plane', 1], ['dist', 1]],
            modeTools: [['comp', 0], ['comp2', 0], ['asm', 1], ['asm2', 0], ['task', 0]],
            filterTools: [['hatch', 0]],
            viewTools: [['pick', 0], ['eye', 0]],
            snapTools: [['boxx', 1], ['box', 1], ['circle', 1], ['tri', 1], ['x', 1], ['perp', 0], ['par', 0], ['ext', 0], ['wave', 1]],
            dragTools: [['hour', 1], ['ne', 0]],
            refTools: [['snap', 1], ['snap2', 1]],
            eyeTools: [['eye', 0]]
        };
        for (const id in toolbars) {
            document.getElementById(id).innerHTML = toolbars[id].map(([name, on]) => `
                <button aria-label="${name}" class="w-[22px] h-[22px] flex items-center justify-center ${on ? 'bg-[#b5b7c2]' : ''}">
                    <svg class="w-[15px] h-[15px]" viewBox="0 0 16 16"><use href="#t-${name}"/></svg>
                </button>
            `).join('');
        }

        const panels = ['s-arrow', 's-gearq', 's-learn', 's-globe', 's-cloud', 'i-gear', 's-cube', 's-shapes'];
        document.getElementById('sideBar').innerHTML = panels.map((name, i) => `
            <button aria-label="${name}" class="flex items-center justify-center pl-2 border-b-2 border-[#b9bac2] ${i === 0 ? 'h-[38px]' : 'h-[33px]'} ${name === 'i-gear' ? 'bg-[#0063a3] text-white [--hole:#0063a3]' : ''}">
                <svg class="w-[18px] h-[18px]"><use href="#${name}"/></svg>
            </button>
        `).join('');

        const templates = ['Railing_list', 'TS_Report_Assembly_Comparison', 'W ------ WELD REPORTS', 'Weld_Error_list', 'Weld list', 'Weld_number_list',
            '材料汇总清单（不分状态）.xls', '腹板长度', '构件.xls', '构件ID选择(按数量选择构件).XLS', '构件零件清单.xls', '构件零件清单（不分状态）.xls'];
        document.getElementById('templates').innerHTML = templates.map((t, i) => `
            <option class="p-0 pl-px min-h-0 flex items-center ${i % 2 ? 'h-[14px]' : 'h-[13px]'} ${i > 5 ? 'text-[13px] pb-1' : ''} ${i === 8 ? 'bg-linear-to-b from-[#0078d7] to-[#0078d7] [-webkit-text-fill-color:white]' : ''}" ${i === 8 ? 'selected' : ''}>${t}</option>
        `).join('');
    </script>
</body>
</html>
